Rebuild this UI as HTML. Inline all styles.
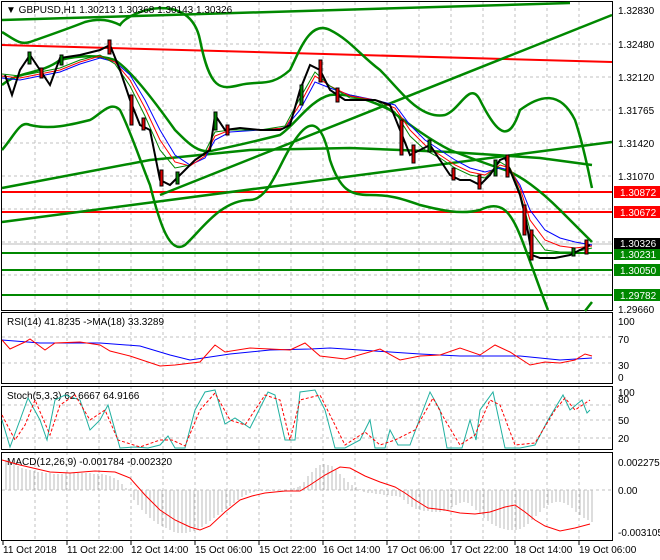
<!DOCTYPE html><html><head><style>body{margin:0;background:#fff}svg{display:block;font-family:"Liberation Sans",sans-serif;font-size:10px}</style></head><body>
<svg width="660" height="560" viewBox="0 0 660 560">
<rect width="660" height="560" fill="#fff"/>
<g stroke="#c0c0c0" stroke-dasharray="3,3" stroke-width="1">
<path d="M35 2V540M67 2V540M99 2V540M131 2V540M163 2V540M195 2V540M227 2V540M259 2V540M291 2V540M323 2V540M355 2V540M387 2V540M419 2V540M451 2V540M483 2V540M515 2V540M547 2V540M579 2V540"/>
<path d="M2 44H612M2 77H612M2 110H612M2 143H612M2 176H612M2 209H612M2 242H612M2 275H612M2 337H612M2 363H612M2 405H612M2 420H612M2 438H612M2 490H612"/>
</g>
<g fill="none" stroke="#000"><rect x="1.5" y="1.5" width="611" height="309"/><rect x="1.5" y="312.5" width="611" height="71"/><rect x="1.5" y="386.5" width="611" height="63"/><rect x="1.5" y="452.5" width="611" height="88"/></g>
<path d="M2 45L612 62" stroke="#f00" stroke-width="2"/>
<path d="M2 192H612M2 212H612" stroke="#f00" stroke-width="2"/>
<path d="M2 253H612M2 270H612M2 295H612" stroke="#080" stroke-width="2"/>
<path d="M2 244H612" stroke="#bbb"/>
<g stroke="#080" stroke-width="2.5" fill="none">
<path d="M2 20L570 3"/><path d="M160 195L612 15"/><path d="M2 222L612 142"/><path d="M2 188L150 160L250 150L350 148L450 152L540 158L592 165"/>
<path d="M2 32C15 40 20 45 30 42C50 35 70 28 85 22C100 18 110 20 120 25C130 10 190 -10 200 40C210 90 220 90 240 85C260 80 270 88 290 70C300 50 310 20 330 30C350 40 360 55 380 70C400 90 420 120 445 115C460 110 470 80 480 100C500 140 510 140 520 110C540 95 560 90 575 120C585 150 590 180 592 188"/>
<path d="M2 150C15 135 20 120 30 125C50 130 70 125 90 120C100 115 110 100 120 110C130 130 140 160 150 185C160 225 170 255 185 245C200 232 220 200 250 200C270 200 280 160 295 140C305 125 320 110 330 160C340 190 350 195 370 195C390 195 400 198 420 205C440 210 460 215 480 210C500 200 510 210 520 235C530 260 540 290 548 310M585 311L592 302"/>
<path d="M2 85C20 70 40 75 60 60C80 55 100 55 115 60C130 70 150 95 175 130C190 145 200 155 215 150C240 145 260 140 280 135C295 125 310 100 330 95C350 93 370 100 390 110C410 125 430 140 450 150C470 158 490 165 505 170C520 175 540 190 560 210C575 225 585 235 592 242"/>
</g>
<polyline fill="none" stroke="#00f" stroke-width="1" points="2,78 20,80 40,76 60,72 80,64 100,58 115,62 130,75 145,100 160,130 175,155 190,165 205,158 215,140 230,132 260,130 285,128 300,110 315,82 330,88 350,95 375,100 395,105 410,125 425,140 440,150 455,160 470,168 485,172 500,168 510,170 520,185 530,210 545,230 560,238 575,242 592,245"/>
<polyline fill="none" stroke="#f00" stroke-width="1" points="2,76 20,78 40,74 60,70 80,62 100,56 115,62 130,80 145,108 160,140 175,162 190,166 205,156 215,136 230,130 260,130 285,128 300,104 315,76 330,86 350,96 375,100 395,108 410,130 425,145 440,155 455,165 470,172 485,175 500,165 510,168 520,188 530,220 545,240 560,246 575,248 592,246"/>
<polyline fill="none" stroke="#080" stroke-width="1" points="2,74 20,76 40,72 60,68 80,60 100,55 115,64 130,86 145,116 160,150 175,168 190,165 205,152 215,132 230,130 260,130 285,126 300,98 315,72 330,86 350,98 375,100 395,112 410,136 425,150 440,158 455,168 470,175 485,178 500,162 510,168 520,192 530,230 545,250 560,252 575,252 592,248"/>
<polyline fill="none" stroke="#000" stroke-width="2" points="5,75 12,95 20,70 30,55 40,70 50,85 60,58 80,55 100,50 110,45 120,70 130,100 140,125 150,130 160,180 170,185 180,175 195,160 210,150 215,115 225,130 240,128 260,130 280,130 290,125 300,90 310,65 320,70 330,90 345,100 360,100 375,100 390,105 400,130 410,155 420,150 430,145 440,160 450,175 460,180 470,180 480,185 490,175 500,160 505,158 512,175 520,195 525,215 532,255 540,258 555,258 570,255 580,250 590,245"/>
<g fill="#d00" stroke="#000" stroke-width="1"><rect x="108" y="40" width="3" height="14"/><rect x="130" y="95" width="3" height="30"/><rect x="160" y="170" width="3" height="16"/><rect x="319" y="60" width="3" height="22"/><rect x="400" y="120" width="3" height="35"/><rect x="452" y="168" width="3" height="12"/><rect x="506" y="155" width="3" height="22"/><rect x="523" y="205" width="3" height="30"/><rect x="530" y="230" width="3" height="30"/><rect x="585" y="240" width="3" height="14"/><rect x="40" y="68" width="3" height="10"/><rect x="142" y="118" width="3" height="12"/><rect x="226" y="125" width="3" height="10"/><rect x="336" y="88" width="3" height="14"/><rect x="412" y="145" width="3" height="18"/><rect x="478" y="175" width="3" height="14"/></g>
<g fill="#080" stroke="#000" stroke-width="1"><rect x="28" y="52" width="3" height="12"/><rect x="60" y="55" width="3" height="10"/><rect x="176" y="172" width="3" height="12"/><rect x="214" y="112" width="3" height="18"/><rect x="300" y="85" width="3" height="20"/><rect x="428" y="140" width="3" height="12"/><rect x="494" y="160" width="3" height="16"/><rect x="572" y="248" width="3" height="8"/></g>
<g fill="#000"><text x="618" y="14">1.32830</text><text x="618" y="48">1.32480</text><text x="618" y="81">1.32120</text><text x="618" y="114">1.31765</text><text x="618" y="147">1.31420</text><text x="618" y="180">1.31070</text><text x="618" y="313">1.29660</text>
<text x="618" y="343">70</text><text x="618" y="369">30</text><text x="618" y="325">100</text><text x="618" y="381">0</text>
<text x="618" y="403">80</text><text x="618" y="424">50</text><text x="618" y="442">20</text><text x="618" y="396">100</text>
<text x="618" y="466">0.002275</text><text x="618" y="494">0.00</text><text x="618" y="536">-0.003105</text></g>
<rect x="614" y="186" width="46" height="12" fill="#f00"/><text x="620" y="196" fill="#fff">1.30872</text>
<rect x="614" y="206" width="46" height="12" fill="#f00"/><text x="620" y="216" fill="#fff">1.30672</text>
<rect x="614" y="238" width="46" height="11" fill="#000"/><text x="620" y="247" fill="#fff">1.30326</text>
<rect x="614" y="249" width="46" height="11" fill="#080"/><text x="620" y="258" fill="#fff">1.30231</text>
<rect x="614" y="264" width="46" height="12" fill="#080"/><text x="620" y="274" fill="#fff">1.30050</text>
<rect x="614" y="289" width="46" height="12" fill="#080"/><text x="620" y="299" fill="#fff">1.29782</text>
<text x="6" y="13" fill="#000">▼ GBPUSD,H1  1.30213 1.30368 1.30143 1.30326</text>
<text x="7" y="325">RSI(14) 41.8235  -&gt;MA(18) 33.3289</text>
<polyline fill="none" stroke="#00f" points="2,340 40,343 100,343 140,346 170,355 190,360 230,354 270,350 310,349 330,348 360,350 420,354 460,356 520,356 560,360 592,358"/>
<polyline fill="none" stroke="#f00" points="2,340 10,349 25,342 30,339 45,350 55,343 80,342 100,345 110,351 130,356 160,366 175,365 200,362 215,345 225,352 250,348 270,349 290,350 305,343 320,356 345,359 380,349 400,360 420,356 440,355 460,348 480,355 495,345 510,352 530,365 545,362 560,363 575,360 585,354 592,356"/>
<text x="7" y="399">Stoch(5,3,3) 62.6667 64.9166</text>
<polyline fill="none" stroke="#20b0a0" points="2,420 10,447 20,420 28,398 40,420 47,440 55,400 65,395 80,400 90,430 100,420 108,405 120,448 135,447 148,448 160,445 168,436 175,448 185,448 195,410 205,392 215,390 225,424 235,418 250,428 268,392 275,395 285,440 295,440 300,392 315,390 325,410 335,448 345,448 360,440 370,420 375,448 385,448 390,430 398,445 410,445 420,418 430,392 440,410 447,448 462,448 470,420 476,440 480,410 493,392 505,448 520,448 535,445 548,420 563,395 570,410 582,400 587,413 590,410"/>
<polyline fill="none" stroke="#f00" stroke-dasharray="3,2" points="2,415 15,440 25,425 35,400 50,435 60,405 75,395 90,420 105,410 118,440 140,447 160,440 172,440 185,446 200,410 215,393 230,420 245,425 265,395 280,400 290,440 300,400 320,395 330,415 345,445 365,432 380,445 395,440 415,430 433,398 445,420 460,445 475,435 490,400 500,405 515,445 535,443 555,410 565,398 575,410 590,400"/>
<text x="7" y="465">MACD(12,26,9) -0.001784 -0.002320</text>
<g stroke="#bbb"><path d="M6 490V460M10 490V462M14 490V464M18 490V466M22 490V468M26 490V469M30 490V470M34 490V471M38 490V472M42 490V472M46 490V473M50 490V473M54 490V474M58 490V474M62 490V474M66 490V473M70 490V473M74 490V473M78 490V473M82 490V473M86 490V473M90 490V473M94 490V474M98 490V474M102 490V474M106 490V475M110 490V476M114 490V478M118 490V480M122 490V484M126 490V488"/>
<path d="M134 490V500M138 490V505M142 490V510M146 490V514M150 490V518M154 490V521M158 490V524M162 490V526M166 490V528M170 490V530M174 490V532M178 490V533M182 490V533M186 490V533M190 490V532M194 490V531M198 490V529M202 490V527M206 490V524M210 490V521M214 490V518M218 490V515M222 490V512M226 490V509M230 490V506M234 490V503M238 490V500M242 490V497M246 490V495M250 490V493M254 490V492M258 490V491"/>
<path d="M300 490V486M304 490V482M308 490V476M312 490V472M316 490V468M320 490V465M324 490V464M328 490V465M332 490V466M336 490V470M340 490V474M344 490V478M348 490V482M352 490V485M356 490V487M360 490V489"/>
<path d="M400 490V497M404 490V500M408 490V504M412 490V507M416 490V509M420 490V510M424 490V511M428 490V511M432 490V512M436 490V512M440 490V512M444 490V511M448 490V510M452 490V507M456 490V505M460 490V503M464 490V502M468 490V503M472 490V506M476 490V510M480 490V514M484 490V518M488 490V521M492 490V524M496 490V526M500 490V528M504 490V529M508 490V530M512 490V530M516 490V530M520 490V529M524 490V527M528 490V524M532 490V520M536 490V516M540 490V512M544 490V508M548 490V505M552 490V503M556 490V502M560 490V502M564 490V503M568 490V505M572 490V508M576 490V512M580 490V515M584 490V518M588 490V520M592 490V522"/>
<path d="M262 490V491M266 490V491M270 490V491M274 490V491M278 490V491M282 490V491M286 490V491M290 490V490M294 490V488M298 490V487M364 490V492M368 490V493M372 490V493M376 490V494M380 490V494M384 490V495M388 490V495M392 490V496M396 490V496"/></g>
<polyline fill="none" stroke="#f00" points="2,460 20,465 50,472 70,473 95,471 115,472 130,478 145,495 160,510 175,520 190,527 200,530 210,526 225,512 240,500 252,496 265,493 285,491 300,491 310,485 325,475 340,467 350,468 365,476 380,482 395,487 405,493 415,500 428,508 445,510 460,513 475,514 490,512 505,507 515,505 525,512 535,520 545,526 560,531 575,528 590,524"/>
<g stroke="#000"><path d="M3 541V545M67 541V545M131 541V545M195 541V545M259 541V545M323 541V545M387 541V545M451 541V545M515 541V545M579 541V545"/></g>
<g fill="#000"><text x="3" y="553">11 Oct 2018</text><text x="67" y="553">11 Oct 22:00</text><text x="131" y="553">12 Oct 14:00</text><text x="195" y="553">15 Oct 06:00</text><text x="259" y="553">15 Oct 22:00</text><text x="323" y="553">16 Oct 14:00</text><text x="387" y="553">17 Oct 06:00</text><text x="451" y="553">17 Oct 22:00</text><text x="515" y="553">18 Oct 14:00</text><text x="579" y="553">19 Oct 06:00</text></g>
</svg></body></html>
